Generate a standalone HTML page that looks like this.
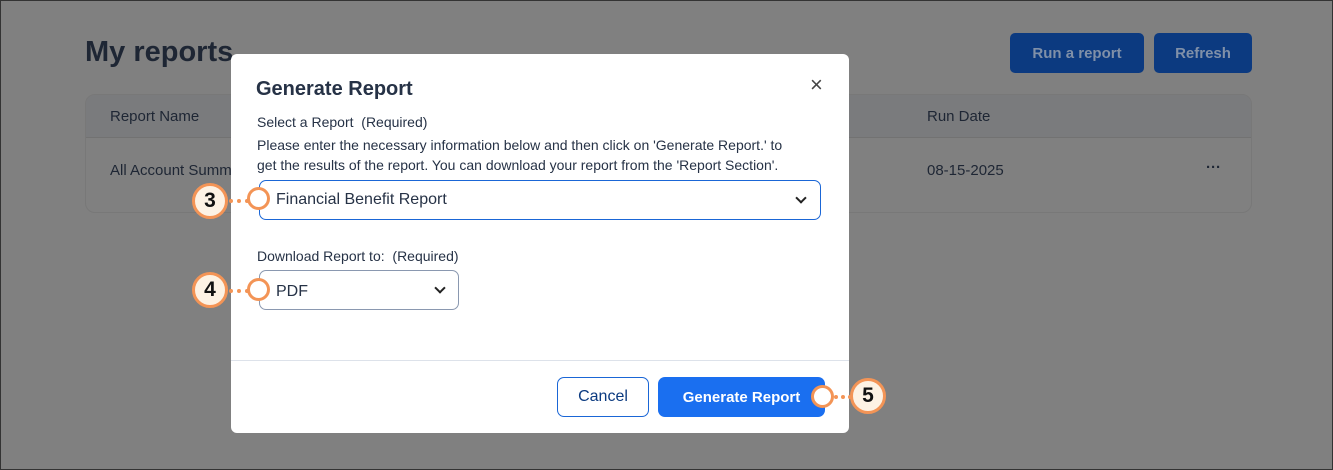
<!DOCTYPE html>
<html><head><meta charset="utf-8"><style>
*{box-sizing:border-box;margin:0;padding:0}
body{width:1333px;height:470px;overflow:hidden;background:#808080;font-family:"Liberation Sans",sans-serif;position:relative}
.frame{position:absolute;inset:0;border:1px solid #333;}
.a{position:absolute}
.h1{left:85px;top:36px;font-size:29px;font-weight:bold;color:#1e2634}
.btn{top:33px;height:40px;background:#0c3a80;border-radius:5px;color:#8090a8;font-weight:bold;font-size:15px;display:flex;align-items:center;justify-content:center}
.table{left:85px;top:94px;width:1167px;height:119px;border:1px solid #787878;border-radius:10px;overflow:hidden}
.th{position:absolute;left:0;right:0;top:0;height:43px;background:#7a7b7d;border-bottom:1px solid #727272}
.t{font-size:15px;color:#1e2634}
.modal{left:231px;top:54px;width:618px;height:379px;background:#fff;border-radius:6px;}
.sel{border:1px solid #8a98b0;border-radius:7px;background:#fff}
.c{position:absolute;width:26px;height:26px;border-radius:50%;border:3px solid #f39456;background:#fff}
.big{position:absolute;width:36px;height:36px;border-radius:50%;border:3px solid #f39456;background:#fdf2e4;font-weight:bold;font-size:21px;color:#111;display:flex;align-items:center;justify-content:center}
.dots{position:absolute;height:0;border-top:4px dotted #f39456}
.chev{position:absolute;width:8px;height:8px;border-right:2px solid #222;border-bottom:2px solid #222;transform:rotate(45deg)}
</style></head><body>
<div class="a h1">My reports</div>
<div class="a btn" style="left:1010px;width:134px">Run a report</div>
<div class="a btn" style="left:1154px;width:98px">Refresh</div>
<div class="a table"><div class="th"></div>
<div class="a t" style="left:24px;top:13px">Report Name</div>
<div class="a t" style="left:841px;top:13px">Run Date</div>
<div class="a t" style="left:24px;top:67px">All Account Summary</div>
<div class="a t" style="left:841px;top:67px">08-15-2025</div>
<div class="a t" style="left:1120px;top:64px;font-weight:bold">···</div>
</div>
<div class="a modal">
<div class="a" style="left:25px;top:24px;font-size:20px;font-weight:bold;color:#263246">Generate Report</div>
<div class="a" style="left:579px;top:18px;font-size:22px;color:#444">×</div>
<div class="a" style="left:26px;top:60px;font-size:14px;color:#263246">Select a Report&nbsp; (Required)</div>
<div class="a" style="left:26px;top:81px;font-size:14px;color:#263246;line-height:20px;white-space:nowrap">Please enter the necessary information below and then click on 'Generate Report.' to<br>get the results of the report. You can download your report from the 'Report Section'.</div>
<div class="a sel" style="left:28px;top:126px;width:562px;height:40px;border-color:#1a66d6"></div>
<div class="a" style="left:45px;top:137px;font-size:16px;color:#263246">Financial Benefit Report</div>
<div class="chev" style="left:566px;top:140px"></div>
<div class="a" style="left:26px;top:194px;font-size:14px;color:#263246">Download Report to:&nbsp; (Required)</div>
<div class="a sel" style="left:28px;top:216px;width:200px;height:40px"></div>
<div class="a" style="left:45px;top:229px;font-size:16px;color:#263246">PDF</div>
<div class="chev" style="left:205px;top:230px"></div>
<div class="a" style="left:0;right:0;top:306px;border-top:1px solid #dde2ea"></div>
<div class="a" style="left:326px;top:323px;width:92px;height:40px;border:1px solid #1a66d6;border-radius:7px;color:#0b3a80;font-size:16px;display:flex;align-items:center;justify-content:center">Cancel</div>
<div class="a" style="left:427px;top:323px;width:167px;height:40px;background:#1a6ff0;border-radius:7px;color:#fff;font-size:15px;font-weight:bold;display:flex;align-items:center;justify-content:center">Generate Report</div>
</div>
<div class="big" style="left:192px;top:183px">3</div>
<div class="dots" style="left:229px;top:199px;width:20px"></div>
<div class="c" style="left:247px;top:187px;width:23px;height:23px"></div>
<div class="big" style="left:192px;top:272px">4</div>
<div class="dots" style="left:229px;top:289px;width:20px"></div>
<div class="c" style="left:247px;top:278px;width:23px;height:23px"></div>
<div class="c" style="left:811px;top:385px;width:23px;height:23px"></div>
<div class="dots" style="left:834px;top:395px;width:18px"></div>
<div class="big" style="left:850px;top:378px">5</div>
<div class="frame"></div>
</body></html>
